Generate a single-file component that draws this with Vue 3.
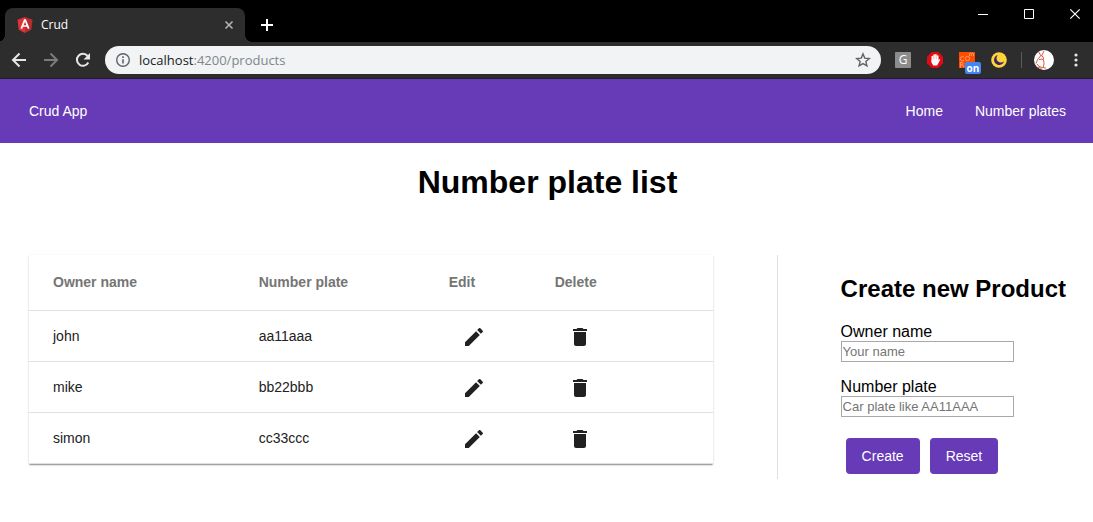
<script setup>
import { ref } from 'vue'

const rows = ref([
  { name: 'john', plate: 'aa11aaa' },
  { name: 'mike', plate: 'bb22bbb' },
  { name: 'simon', plate: 'cc33ccc' },
])
const address = { host: 'localhost', rest: ':4200/products' }
const owner = ref('')
const plate = ref('')

function remove(index) {
  rows.value.splice(index, 1)
}
function create() {
  if (owner.value && plate.value) {
    rows.value.push({ name: owner.value, plate: plate.value })
    reset()
  }
}
function reset() {
  owner.value = ''
  plate.value = ''
}
</script>

<template>
  <div class="window">
    <div class="tabstrip">
      <div class="tab">
        <svg class="i16" viewBox="0 0 16 16" aria-hidden="true">
          <path d="M8 0 .5 2.7l1.2 10L8 16z" fill="#e23237" />
          <path d="M8 0l7.5 2.7-1.2 10L8 16z" fill="#b52e31" />
          <path d="M8 2.4 4.3 11.6M8 2.4l3.7 9.200M5.500 9h5" fill="none" stroke="#fff" stroke-width="1.700" />
        </svg>
        <span class="tab-title">Crud</span>
        <button class="plain tab-close" aria-label="Close tab">
          <svg class="i16" viewBox="0 0 16 16"><path d="M4.500 4.500l7 7m0-7l-7 7" stroke="#b4b4b4" stroke-width="1.600" /></svg>
        </button>
      </div>
      <button class="plain new-tab" aria-label="New tab">
        <svg class="i16" viewBox="0 0 16 16"><path d="M8 2v12M2 8h12" stroke="#fff" stroke-width="2" /></svg>
      </button>
      <div class="win-buttons">
        <button class="plain" aria-label="Minimize">
          <svg class="i16" viewBox="0 0 16 16"><path d="M3 8.500h10" stroke="#fff" /></svg>
        </button>
        <button class="plain" aria-label="Maximize">
          <svg class="i16" viewBox="0 0 16 16"><path d="M3.500 3.500h9v9h-9z" fill="none" stroke="#fff" /></svg>
        </button>
        <button class="plain" aria-label="Close">
          <svg class="i16" viewBox="0 0 16 16"><path d="M3.300 3.300l9.400 9.400m0-9.400l-9.400 9.400" stroke="#fff" stroke-width="1.200" /></svg>
        </button>
      </div>
    </div>

    <div class="toolbar">
      <div class="nav">
        <button class="plain" aria-label="Back">
          <svg class="i16" viewBox="0 0 16 16"><path d="M15 8H2.500M8.500 1.500L2 8l6.500 6.500" fill="none" stroke="#e6e6e6" stroke-width="2" /></svg>
        </button>
        <button class="plain" aria-label="Forward">
          <svg class="i16" viewBox="0 0 16 16"><path d="M1 8h12.500M7.500 1.500L14 8l-6.500 6.500" fill="none" stroke="#7c7c7c" stroke-width="2" /></svg>
        </button>
        <button class="plain" aria-label="Reload">
          <svg class="i16" viewBox="0 0 16 16">
            <path d="M13.300 10.500A6 6 0 1 1 12.600 4" fill="none" stroke="#e6e6e6" stroke-width="2" />
            <path d="M15 1v6.500H8.500z" fill="#e6e6e6" />
          </svg>
        </button>
      </div>
      <div class="omnibox">
        <svg class="i16" viewBox="0 0 16 16" aria-hidden="true">
          <circle cx="8" cy="8" r="6.300" fill="none" stroke="#5f6368" stroke-width="1.400" />
          <path d="M8 7.200v4.300M8 4.300v1.700" stroke="#5f6368" stroke-width="1.600" />
        </svg>
        <span class="url">{{ address.host }}<span class="url-rest">{{ address.rest }}</span></span>
        <button class="plain" aria-label="Bookmark this page">
          <svg class="i16" viewBox="0 0 16 16">
            <path d="M8 1.900l1.750 4.200 4.550.4-3.450 3 1.050 4.400L8 11.550 4.100 13.900l1.050-4.400-3.450-3 4.550-.4z" fill="none" stroke="#5f6368" stroke-width="1.400" />
          </svg>
        </button>
      </div>
      <div class="extensions">
        <svg class="i16" viewBox="0 0 16 16" aria-hidden="true">
          <rect width="16" height="16" rx="1" fill="#8c8c8c" />
          <text x="8" y="12" text-anchor="middle" class="glyph" font-size="12">G</text>
        </svg>
        <svg class="i16" viewBox="0 0 16 16" aria-hidden="true">
          <path d="M4.700 0h6.600L16 4.700v6.600L11.300 16H4.700L0 11.300V4.700z" fill="#e30b13" />
          <path d="M5.300 10V4.500M7.100 8V3M8.900 8V2.800M10.700 8V4" stroke="#fff" stroke-width="1.600" stroke-linecap="round" />
          <path d="M4.600 7.500h6.800v.800l1-1.300.8.700-2.200 4.300-1 1.600H6.300L4.600 10.800z" fill="#fff" />
        </svg>
        <span class="badged">
          <svg class="i16" viewBox="0 0 16 16" aria-hidden="true">
            <rect width="16" height="16" fill="#ff4d00" />
            <g fill="none" stroke="#ff9a68">
              <path d="M5 5.200a2.200 2.200 0 1 0 0 3" />
              <circle cx="8.500" cy="6.500" r="2.100" />
              <path d="M10.500 4V1.500q1.200-1 1.800 0V4M12.300 1.700q1.500-1 2.200 0V4M1.500 15.500v-5h2q1 1.200 0 2.300h-2M3.500 13l1.500 2" />
            </g>
          </svg>
          <span class="badge">on</span>
        </span>
        <svg class="i16" viewBox="0 0 16 16" aria-hidden="true">
          <circle cx="8" cy="8" r="7.800" fill="#ffd43b" />
          <path d="M6.800 3a5.100 5.100 0 1 0 6.300 6.300 3.600 3.600 0 1 1-6.300-6.300z" fill="#3a2468" />
        </svg>
      </div>
      <div class="sep"></div>
      <svg class="avatar" viewBox="0 0 20 20" aria-hidden="true">
        <circle cx="10" cy="10" r="10" fill="#fff" />
        <path d="M7 6L4.500 1.500M7.500 6L10 1M7 5.500q3 .8 2.500 4 1.200 5-.2 7.500M6.500 6Q3 9 2 13.500M5 9.500q4-1.500 4.500 1M3 14q1.500 3 5 3.500l4 .5M3.500 17l4 1.500" fill="none" stroke="#dc5948" />
      </svg>
      <button class="plain menu" aria-label="Menu">
        <svg class="i16" viewBox="0 0 16 16" fill="#e6e6e6"><circle cx="8" cy="3" r="1.600" /><circle cx="8" cy="8" r="1.600" /><circle cx="8" cy="13" r="1.600" /></svg>
      </button>
    </div>

    <header class="appbar">
      <a href="#">Crud App</a>
      <nav>
        <a href="#home">Home</a>
        <a href="#products">Number plates</a>
      </nav>
    </header>

    <main>
      <h1>Number plate list</h1>
      <div class="columns">
        <table>
          <colgroup><col class="c-name" /><col class="c-plate" /><col class="c-edit" /><col /></colgroup>
          <thead>
            <tr><th>Owner name</th><th>Number plate</th><th>Edit</th><th>Delete</th></tr>
          </thead>
          <tbody>
            <tr v-for="(row, i) in rows" :key="row.plate">
              <td>{{ row.name }}</td>
              <td>{{ row.plate }}</td>
              <td>
                <button class="plain action" :aria-label="'Edit ' + row.name">
                  <svg viewBox="0 0 24 24"><path d="M3 17.250V21h3.750L17.810 9.940l-3.750-3.750L3 17.250zM20.710 7.040c.39-.39.39-1.020 0-1.410l-2.340-2.340c-.39-.39-1.020-.39-1.410 0l-1.830 1.830 3.750 3.750 1.830-1.830z" /></svg>
                </button>
              </td>
              <td>
                <button class="plain action" :aria-label="'Delete ' + row.name" @click="remove(i)">
                  <svg viewBox="0 0 24 24"><path d="M6 19c0 1.100.9 2 2 2h8c1.100 0 2-.9 2-2V7H6v12zM19 4h-3.500l-1-1h-5l-1 1H5v2h14V4z" /></svg>
                </button>
              </td>
            </tr>
          </tbody>
        </table>

        <form @submit.prevent="create" @reset.prevent="reset">
          <h2>Create new Product</h2>
          <div class="field">
            <label for="owner">Owner name</label>
            <input id="owner" v-model="owner" type="text" placeholder="Your name" />
          </div>
          <div class="field">
            <label for="plate">Number plate</label>
            <input id="plate" v-model="plate" type="text" placeholder="Car plate like AA11AAA" />
          </div>
          <div class="buttons">
            <button class="raised" type="submit">Create</button>
            <button class="raised" type="reset">Reset</button>
          </div>
        </form>
      </div>
    </main>
  </div>
</template>

<style>
body {
  background: #fff;
}
</style>

<style scoped>
.window {
  font-family: "Liberation Sans", Arial, sans-serif;
  color: #000;
}
.i16 {
  display: block;
  width: 16px;
  height: 16px;
  flex: none;
}
.plain {
  display: flex;
  align-items: center;
  justify-content: center;
  padding: 0;
  border: 0;
  background: none;
  cursor: pointer;
}

.tabstrip {
  display: flex;
  height: 42px;
  padding-left: 5px;
  background: #000;
}
.tab {
  position: relative;
  display: flex;
  align-items: center;
  box-sizing: border-box;
  width: 240px;
  margin-top: 8px;
  padding: 0 8px 0 12px;
  border-radius: 8px 8px 0 0;
  background: #2d2d2d;
}
.tab::before,
.tab::after {
  content: "";
  position: absolute;
  bottom: 0;
  width: 8px;
  height: 8px;
}
.tab::before {
  right: 100%;
  background: radial-gradient(circle at 0 0, transparent 8px, #2d2d2d 8px);
}
.tab::after {
  left: 100%;
  background: radial-gradient(circle at 100% 0, transparent 8px, #2d2d2d 8px);
}
.tab-title {
  flex: 1;
  margin-left: 8px;
  font: 12px/16px "Open Sans", "Noto Sans", sans-serif;
  color: #fff;
}
.new-tab {
  margin: 8px 0 0 14px;
}
.win-buttons {
  display: flex;
  gap: 10px;
  height: 28px;
  margin-left: auto;
}
.win-buttons button {
  width: 36px;
}

.toolbar {
  display: flex;
  align-items: center;
  height: 36px;
  border-bottom: 1px solid #221d28;
  background: #2d2d2d;
}
.nav {
  display: flex;
  gap: 16px;
  margin: 0 14px 0 11px;
}
.omnibox {
  display: flex;
  flex: 1;
  align-items: center;
  height: 28px;
  padding: 0 10px;
  border-radius: 14px;
  background: #f1f3f4;
}
.url {
  flex: 1;
  margin-left: 8px;
  font: 13px/20px "Open Sans", "Noto Sans", sans-serif;
  color: #202124;
}
.url-rest {
  color: #80868b;
}
.extensions {
  display: flex;
  gap: 16px;
  margin-left: 14px;
}
.badged {
  position: relative;
}
.badge {
  position: absolute;
  left: 6px;
  top: 10px;
  width: 16px;
  border-radius: 2px;
  background: #4285f4;
  color: #fff;
  font: bold 10px/12px "Open Sans", sans-serif;
  text-align: center;
}
.glyph {
  font-family: "Open Sans", sans-serif;
  fill: #fff;
}
.sep {
  width: 1px;
  height: 16px;
  margin: 0 12px 0 14px;
  background: #5c5c5c;
}
.avatar {
  width: 20px;
  height: 20px;
}
.menu {
  margin: 0 9px 0 14px;
}

.appbar {
  display: flex;
  align-items: center;
  justify-content: space-between;
  height: 64px;
  padding: 0 27px 0 29px;
  background: #673ab7;
  font-size: 14px;
}
.appbar a {
  color: #fff;
  text-decoration: none;
}
.appbar nav {
  display: flex;
  gap: 32px;
}

main {
  padding: 0 27px 0 29px;
}
h1 {
  margin: 20px 0 54px;
  font-size: 32px;
  line-height: 38px;
  text-align: center;
}
.columns {
  display: flex;
  align-items: flex-start;
}
table {
  flex: 1;
  table-layout: fixed;
  border-collapse: separate;
  border-spacing: 0;
  font-size: 14px;
  box-shadow: 0 2px 1px -1px rgba(0, 0, 0, 0.2), 0 1px 1px 0 rgba(0, 0, 0, 0.14), 0 1px 3px 0 rgba(0, 0, 0, 0.12);
}
.c-name {
  width: 33.6%;
}
.c-plate {
  width: 27.8%;
}
.c-edit {
  width: 15.5%;
}
th,
td {
  padding: 0;
  border-bottom: 1px solid #e0e0e0;
  text-align: left;
}
th:first-child,
td:first-child {
  padding-left: 24px;
}
th {
  height: 53px;
  padding-bottom: 2px;
  color: #757575;
}
td {
  height: 50px;
  color: #212121;
}
.action {
  padding: 2px 13px 0;
}
.action svg {
  display: block;
  width: 24px;
  height: 24px;
  fill: #212121;
}

form {
  margin-left: 64px;
  padding: 20px 0 5px 63px;
  border-left: 1px solid #e0e0e0;
}
h2 {
  margin: 0 0 19px;
  font-size: 24px;
  line-height: 28px;
  white-space: nowrap;
}
.field {
  margin-bottom: 15px;
  font-size: 16px;
  line-height: 19px;
}
.field label,
.field input {
  display: block;
}
.field input {
  box-sizing: border-box;
  width: 173px;
  height: 21px;
  padding: 1px;
  border: 1px solid #a9a9a9;
  border-radius: 0;
  background: #fff;
  font: 13px "Liberation Sans", Arial, sans-serif;
}
.field input::placeholder {
  color: #757575;
}
.buttons {
  display: flex;
  gap: 10px;
  padding: 6px 5px 0;
}
.raised {
  height: 36px;
  padding: 0 16px;
  border: 0;
  border-radius: 4px;
  background: #673ab7;
  color: #fff;
  font: 14px "Liberation Sans", Arial, sans-serif;
  cursor: pointer;
}
</style>
